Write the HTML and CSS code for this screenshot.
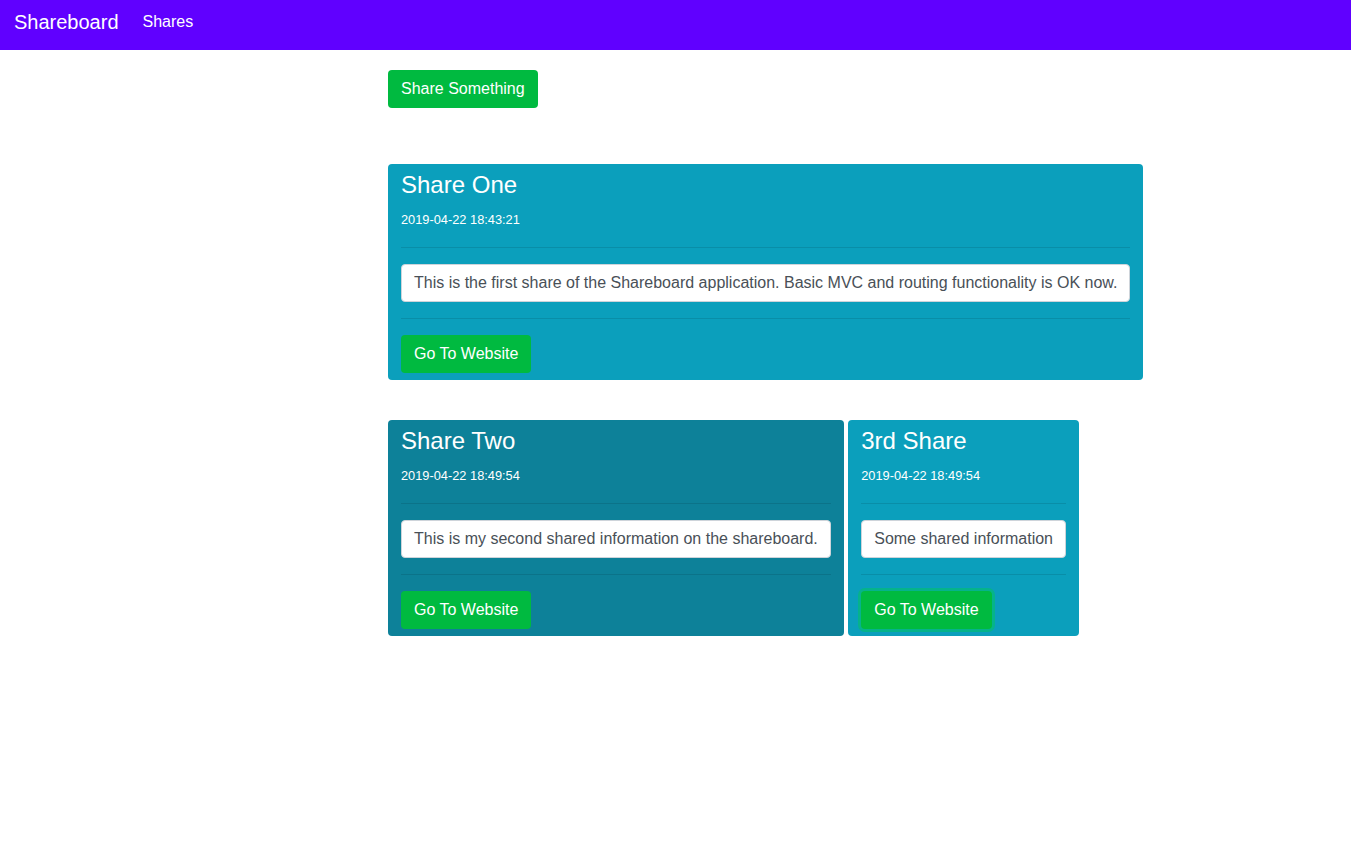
FILE: index.html
```html
<!DOCTYPE html>
<html lang="en">
<head>
<meta charset="utf-8">
<meta name="viewport" content="width=device-width, initial-scale=1">
<title>Shareboard</title>
<link rel="stylesheet" href="styles.css">
</head>
<body>
<nav class="navbar">
  <a class="brand" href="#">Shareboard</a>
  <a class="nav-link" href="#shares">Shares</a>
</nav>
<main class="content">
  <a class="btn" href="#add">Share Something</a>
  <section class="shares" id="shares">
    <article class="card">
      <h3 class="card-title">Share One</h3>
      <small class="date">2019-04-22 18:43:21</small>
      <hr class="rule">
      <p class="message">This is the first share of the Shareboard application. Basic MVC and routing functionality is OK now.</p>
      <hr class="rule">
      <a class="btn" href="#one">Go To Website</a>
    </article>
    <article class="card card-dark">
      <h3 class="card-title">Share Two</h3>
      <small class="date">2019-04-22 18:49:54</small>
      <hr class="rule">
      <p class="message">This is my second shared information on the shareboard.</p>
      <hr class="rule">
      <a class="btn" href="#two">Go To Website</a>
    </article>
    <article class="card">
      <h3 class="card-title">3rd Share</h3>
      <small class="date">2019-04-22 18:49:54</small>
      <hr class="rule">
      <p class="message">Some shared information</p>
      <hr class="rule">
      <a class="btn btn-focus" href="#three">Go To Website</a>
    </article>
  </section>
</main>
</body>
</html>
```
FILE: styles.css
```css
* {
  box-sizing: border-box;
}

body {
  margin: 0;
  background: #fff;
  color: #212529;
  font: 16px/24px "Liberation Sans", Arial, sans-serif;
}

.navbar {
  display: flex;
  align-items: flex-start;
  gap: 24px;
  padding: 7px 14px 13px;
  background: #6000ff;
}

.brand,
.nav-link {
  color: #fff;
  text-decoration: none;
}

.brand {
  font-size: 20px;
  line-height: 30px;
}

.nav-link {
  line-height: 30px;
}

.content {
  max-width: 1188px;
  padding: 20px 0 0 388px;
}

.btn {
  display: inline-block;
  padding: 7px 13px;
  border-radius: 4px;
  background: #00ba40;
  color: #fff;
  text-decoration: none;
  vertical-align: top;
}

.btn-focus {
  box-shadow: 0 0 0 3px rgba(0, 200, 90, 0.5);
}

.shares {
  margin-top: 56px;
}

.card {
  display: inline-block;
  max-width: 100%;
  margin-bottom: 40px;
  padding: 7px 13px;
  border-radius: 4px;
  background: #0b9fbc;
  color: #fff;
  vertical-align: top;
}

.card-dark {
  background: #0d8199;
}

.card-title {
  margin: 0 0 10px;
  font-size: 24px;
  font-weight: 400;
  line-height: 28px;
}

.date {
  display: block;
  font-size: 80%;
  line-height: 22px;
}

.rule {
  margin: 16px 0;
  border: 0;
  border-top: 1px solid rgba(0, 0, 0, 0.1);
}

.message {
  margin: 0;
  padding: 6px 12px;
  border: 1px solid #ced4da;
  border-radius: 4px;
  background: #fff;
  color: #495057;
}
```
